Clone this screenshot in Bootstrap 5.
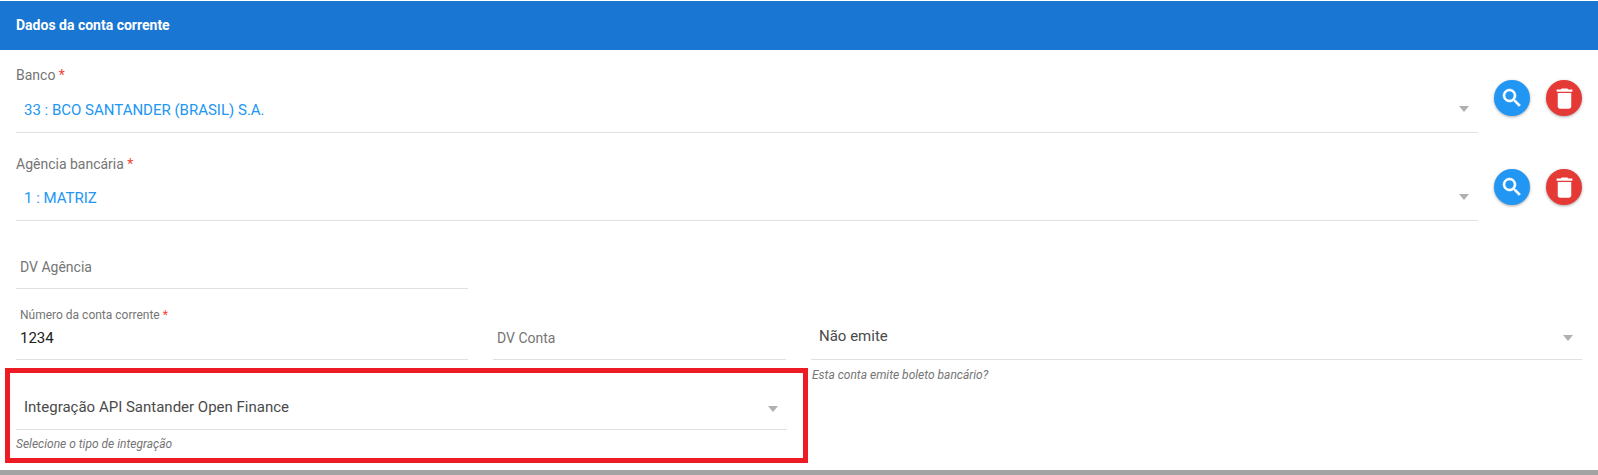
<!DOCTYPE html>
<html lang="pt">
<head>
<meta charset="utf-8">
<title>Dados da conta corrente</title>
<link rel="stylesheet" href="https://cdn.jsdelivr.net/npm/bootstrap@5.3.0/dist/css/bootstrap.min.css">
<style>
html,body{height:475px;overflow:hidden;background:#fff}
body{font-family:Roboto,"Liberation Sans",sans-serif;color:#212121}
.sheet{margin-top:1px;height:469px;background:#fff;box-shadow:0 6px 1px rgba(0,0,0,.36)}
.sheet-head{height:49px;background:#1976d2;color:#fff;font-size:14px;font-weight:700;padding-left:16px;line-height:48px}
.sheet-body{padding:0 16px}
.req{color:#f44336}
.lbl{font-size:14px;line-height:20px;color:#757575}
.pick{position:relative;border-bottom:1px solid #e0e0e0}
.caret-down{position:absolute;width:0;height:0;border-left:5.5px solid transparent;border-right:5.5px solid transparent;border-top:6px solid #b0b0b0}
.fld-top{flex:1 1 auto;min-width:0}
.val-blue{color:#2196f3;font-size:15px;line-height:24px;padding:0 8px 10px}
.bank-one{padding-top:15px}
.bank-one .val-blue{margin-top:13px}
.bank-two{padding-top:21px}
.bank-two .val-blue{margin-top:12px}
.bank-one .caret-down,.bank-two .caret-down{right:9px;top:8px}
.acts{width:104px;flex:none;padding-left:16px}
.round-act{width:36px;height:36px;padding:0;border:0;border-radius:50%;color:#fff;box-shadow:0 1px 3px rgba(0,0,0,.35)}
.round-act svg{display:block;margin:auto}
.act-blue{background:#2196f3}
.act-red{background:#e53935}
.acts-one{padding-top:30px}
.acts-two{padding-top:36px}
.plain-row{gap:0}
.w-one{width:452px}
.w-two{width:293px;margin-left:25px}
.w-three{width:771px;margin-left:25px}
.holder{font-size:14px;color:#757575;line-height:20px}
.dv-ag{height:68px;padding:36px 0 0 4px;box-sizing:border-box}
.num-wrap{height:71px}
.num-lbl{font-size:12px;line-height:16px;color:#757575;padding:18px 0 0 4px}
.num-val{font-size:15px;line-height:20px;color:#212121;padding:5px 0 0 4px}
.dv-ct{padding:39px 0 0 4px;height:71px;box-sizing:border-box}
.emit{padding:35px 0 0 8px;height:71px;box-sizing:border-box;font-size:15px;line-height:24px;color:#4a4a4a}
.emit .caret-down{right:9px;top:46px}
.low-row{margin-top:8px}
.mark-box{margin-left:-11px;width:803px;height:95px;border:5px solid #ed1c24;flex:none;padding:0 0 0 6px}
.int-pick{width:771px;height:57px;padding:22px 0 0 8px;box-sizing:border-box;font-size:15px;line-height:24px;color:#4a4a4a}
.int-pick .caret-down{right:9px;top:33px}
.hint-txt{font-size:12px;font-style:italic;color:#757575;line-height:16px}
.hint-box{margin-top:6px}
.hint-side{margin:-1px 0 0 4px}
</style>
</head>
<body>
<div class="sheet">
  <div class="sheet-head">Dados da conta corrente</div>
  <div class="sheet-body">
    <div class="d-flex">
      <div class="fld-top bank-one">
        <div class="lbl">Banco <span class="req">*</span></div>
        <div class="pick val-blue">33 : BCO SANTANDER (BRASIL) S.A.<span class="caret-down"></span></div>
      </div>
      <div class="acts acts-one d-flex gap-3">
        <button class="round-act act-blue" type="button" aria-label="Buscar"><svg width="24" height="24" viewBox="0 0 24 24" fill="#fff" stroke="#fff" stroke-width=".6"><path d="M15.5 14h-.79l-.28-.27A6.47 6.47 0 0 0 16 9.5 6.5 6.5 0 1 0 9.5 16c1.61 0 3.09-.59 4.23-1.57l.27.28v.79l5 4.99L20.49 19l-4.99-5zm-6 0C7.01 14 5 11.99 5 9.5S7.01 5 9.5 5 14 7.01 14 9.5 11.99 14 9.5 14z"/></svg></button>
        <button class="round-act act-red" type="button" aria-label="Excluir"><svg width="27" height="27" viewBox="0 0 24 24" fill="#fff"><path d="M6 19c0 1.1.9 2 2 2h8c1.1 0 2-.9 2-2V7H6v12zM19 4h-3.5l-1-1h-5l-1 1H5v2h14V4z"/></svg></button>
      </div>
    </div>
    <div class="d-flex">
      <div class="fld-top bank-two">
        <div class="lbl">Agência bancária <span class="req">*</span></div>
        <div class="pick val-blue">1 : MATRIZ<span class="caret-down"></span></div>
      </div>
      <div class="acts acts-two d-flex gap-3">
        <button class="round-act act-blue" type="button" aria-label="Buscar"><svg width="24" height="24" viewBox="0 0 24 24" fill="#fff" stroke="#fff" stroke-width=".6"><path d="M15.5 14h-.79l-.28-.27A6.47 6.47 0 0 0 16 9.5 6.5 6.5 0 1 0 9.5 16c1.61 0 3.09-.59 4.23-1.57l.27.28v.79l5 4.99L20.49 19l-4.99-5zm-6 0C7.01 14 5 11.99 5 9.5S7.01 5 9.5 5 14 7.01 14 9.5 11.99 14 9.5 14z"/></svg></button>
        <button class="round-act act-red" type="button" aria-label="Excluir"><svg width="27" height="27" viewBox="0 0 24 24" fill="#fff"><path d="M6 19c0 1.1.9 2 2 2h8c1.1 0 2-.9 2-2V7H6v12zM19 4h-3.5l-1-1h-5l-1 1H5v2h14V4z"/></svg></button>
      </div>
    </div>
    <div class="w-one pick holder dv-ag">DV Agência</div>
    <div class="d-flex plain-row">
      <div class="w-one pick num-wrap">
        <div class="num-lbl">Número da conta corrente <span class="req">*</span></div>
        <div class="num-val">1234</div>
      </div>
      <div class="w-two pick holder dv-ct">DV Conta</div>
      <div class="w-three pick emit">Não emite<span class="caret-down"></span></div>
    </div>
    <div class="d-flex low-row">
      <div class="mark-box">
        <div class="pick int-pick">Integração API Santander Open Finance<span class="caret-down"></span></div>
        <div class="hint-txt hint-box">Selecione o tipo de integração</div>
      </div>
      <div class="hint-txt hint-side">Esta conta emite boleto bancário?</div>
    </div>
  </div>
</div>
</body>
</html>
